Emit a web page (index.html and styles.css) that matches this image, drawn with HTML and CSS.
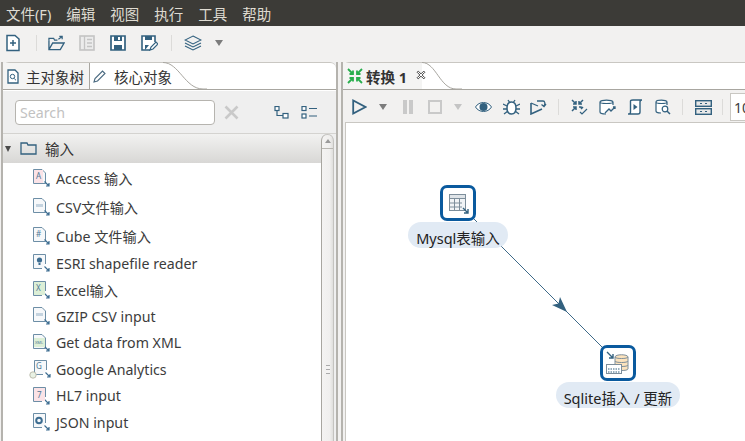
FILE: index.html
```html
<!DOCTYPE html>
<html lang="en">
<head>
<meta charset="UTF-8" />
<title>转换 1</title>
<link rel="stylesheet" href="styles.css">
</head>
<body>

<svg class="defs" width="0" height="0">
  <defs>
    <symbol id="step-arrow" viewBox="0 0 6 6"><path d="M0.5 0.5L5 5M5 2V5H2" fill="none" stroke="#3d6d91" stroke-width="1.2"/></symbol>
    <symbol id="doc" viewBox="0 0 20 20">
      <path d="M2.5 1.5H11L14.5 5V15.500H2.500Z" fill="#f6f8fa" stroke="#6d8ea6"/>
      <use href="#step-arrow" x="13" y="13" width="6" height="6"/>
    </symbol>
    <symbol id="box" viewBox="0 0 20 20">
      <path d="M14.500 11V1.500H2.500V15.500H11" fill="#f6f8fa" stroke="#6d8ea6"/>
      <use href="#step-arrow" x="13" y="13" width="6" height="6"/>
    </symbol>
  </defs>
</svg>

<div class="menubar">
  <span>文件(F)</span><span>编辑</span><span>视图</span><span>执行</span><span>工具</span><span>帮助</span>
</div>

<div class="toolbar">
  <svg class="tool" width="16" height="18" viewBox="0 0 16 18"><path d="M2 1.500H10L14 5V16.500H2Z" fill="#fff" stroke="#33617f" stroke-width="1.500"/><path d="M8 6V12M5 9H11" stroke="#33617f" stroke-width="1.500"/></svg>
  <i class="sep sep-a"></i>
  <svg class="tool t-open" width="17" height="16" viewBox="0 0 18 16"><path d="M1 5V15H13L17 8H5L1 15" fill="none" stroke="#33617f" stroke-width="1.400"/><path d="M1 5V3H6L7 5H10M11 4L15 1M12 1H15V4" fill="none" stroke="#33617f" stroke-width="1.300"/></svg>
  <svg class="tool t-list" width="16" height="16" viewBox="0 0 16 16"><rect x="1" y="1" width="14" height="14" fill="#ececec" stroke="#c4c4c4" stroke-width="1.600"/><path d="M5.500 1V15M8 4.500H13M8 8H13M8 11.500H13" stroke="#c4c4c4" stroke-width="1.300"/></svg>
  <svg class="tool t-save" width="16" height="16" viewBox="0 0 16 16"><path d="M1 1H15V15H1Z" fill="#fff" stroke="#33617f" stroke-width="1.700"/><path d="M4 1V6H12V1M4 15V10H12V15" fill="#33617f"/><rect x="8" y="2" width="2" height="3" fill="#fff"/></svg>
  <svg class="tool t-saveas" width="17" height="17" viewBox="0 0 17 17"><path d="M9 15H1V1H14V7" fill="#fff" stroke="#33617f" stroke-width="1.600"/><path d="M4 1V5H11V1M4 15V10H8" fill="#33617f"/><path d="M9 15L10 12L15 7L17 9L12 14Z" fill="#fff" stroke="#33617f" stroke-width="1.200"/></svg>
  <i class="sep sep-b"></i>
  <svg class="tool t-layers" width="18" height="16" viewBox="0 0 18 16"><path d="M9 1L17 5L9 9L1 5Z" fill="none" stroke="#33617f" stroke-width="1.100"/><path d="M1 8L9 12L17 8M1 11L9 15L17 11" fill="none" stroke="#33617f" stroke-width="1.100"/></svg>
  <i class="caret t-caret"></i>
</div>

<div class="workspace">
  <section class="left-panel">
    <div class="tabstrip">
      <div class="tab-inactive">
        <svg width="12" height="15" viewBox="0 0 12 15"><path d="M1 1H8L11 4V14H1Z" fill="#fff" stroke="#33617f" stroke-width="1.300"/><circle cx="5.500" cy="7.500" r="2.200" fill="none" stroke="#33617f"/><path d="M7.200 9.500L9 11.300" stroke="#33617f"/></svg>
        <span>主对象树</span>
      </div>
      <div class="tab-active">
        <svg width="13" height="13" viewBox="0 0 13 13"><path d="M1 12L2 8.500L9.500 1L12 3.500L4.500 11Z" fill="#fff" stroke="#48687f" stroke-width="1.100"/></svg>
        <span>核心对象</span>
      </div>
      <svg class="tab-curve" width="44" height="28" viewBox="0 0 44 28"><path d="M0 0.500C16 0.500 22 27 40 27H44" fill="none" stroke="#a8a6a0"/></svg>
    </div>
    <div class="search-row">
      <div class="search-input">Search</div>
      <svg class="clear" width="15" height="15" viewBox="0 0 15 15"><path d="M1.500 1.500L13.500 13.500M13.500 1.500L1.500 13.500" stroke="#c9c9c9" stroke-width="2.600"/></svg>
      <svg class="collapse" width="15" height="13" viewBox="0 0 15 13"><path d="M3 3.500V9.500H9" fill="none" stroke="#33617f" stroke-width="1.200"/><rect x="1" y="0.500" width="4" height="4" fill="#fff" stroke="#33617f" stroke-width="1.200"/><rect x="9" y="7.500" width="5" height="4.500" fill="#fff" stroke="#33617f" stroke-width="1.200"/></svg>
      <svg class="expand" width="16" height="13" viewBox="0 0 16 13"><rect x="1" y="0.500" width="4" height="4" fill="#fff" stroke="#33617f" stroke-width="1.200"/><rect x="1" y="8" width="4" height="4" fill="#fff" stroke="#33617f" stroke-width="1.200"/><path d="M8 2.500H16M8 10H16" stroke="#33617f" stroke-width="1.200"/></svg>
    </div>
    <div class="tree-wrap">
      <div class="tree">
        <div class="group">
          <i class="twist"></i>
          <svg width="17" height="13" viewBox="0 0 17 13"><path d="M1 12V1H7L8 3H16V12Z" fill="none" stroke="#33617f" stroke-width="1.300"/></svg>
          <span>输入</span>
        </div>
        <div class="row tall"><svg class="ico" width="20" height="20"><use href="#doc"/><rect x="3" y="2" width="9" height="13" fill="#fbe3e7"/><text x="5" y="11" class="glyph">A</text></svg><span>Access 输入</span></div>
        <div class="row tall"><svg class="ico" width="20" height="20"><use href="#doc"/><rect x="5" y="7" width="7" height="3" fill="#c4d3df"/></svg><span>CSV文件输入</span></div>
        <div class="row tall"><svg class="ico" width="20" height="20"><use href="#doc"/><text x="5" y="11" class="glyph">#</text></svg><span>Cube 文件输入</span></div>
        <div class="row"><svg class="ico" width="20" height="20"><use href="#box"/><circle cx="8.500" cy="7" r="2.600" fill="#3d6d91"/><path d="M7.500 10H9.500V12H7.500Z" fill="#3d6d91"/></svg><span>ESRI shapefile reader</span></div>
        <div class="row"><svg class="ico" width="20" height="20"><use href="#box"/><rect x="3" y="2" width="11" height="13" fill="#dcefd6"/><text x="5" y="11" class="glyph">X</text></svg><span>Excel输入</span></div>
        <div class="row"><svg class="ico" width="20" height="20"><use href="#doc"/><rect x="5" y="7" width="7" height="3" fill="#c4d3df"/></svg><span>GZIP CSV input</span></div>
        <div class="row"><svg class="ico" width="20" height="20"><use href="#doc"/><rect x="3" y="5" width="11" height="9" fill="#dcefd6"/><text x="4" y="11" class="glyph-sm">XML</text></svg><span>Get data from XML</span></div>
        <div class="row"><svg class="ico ico-wide" width="22" height="20" viewBox="-2 0 22 20"><use href="#box"/><text x="5" y="10" class="glyph">G</text><circle cx="2" cy="16" r="3.200" fill="#e8f1e4" stroke="#bdbdae"/></svg><span>Google Analytics</span></div>
        <div class="row"><svg class="ico" width="20" height="20"><use href="#box"/><rect x="3" y="2" width="11" height="13" fill="#fbe3e7"/><text x="6" y="12" class="glyph">7</text></svg><span>HL7 input</span></div>
        <div class="row"><svg class="ico" width="20" height="20"><use href="#box"/><circle cx="8" cy="8.500" r="2.800" fill="none" stroke="#3d6d91" stroke-width="2"/></svg><span>JSON input</span></div>
      </div>
      <div class="scrollbar">
        <div class="sb-up"></div>
        <div class="sb-thumb"><b class="grip"></b></div>
      </div>
    </div>
  </section>

  <section class="right-panel">
    <div class="editor-tabs">
      <div class="editor-tab">
        <svg width="16" height="16" viewBox="0 0 16 16"><g fill="none" stroke="#27ae4c" stroke-width="1.800"><path d="M1 1L6 6M6 2.500V6H2.500"/><path d="M15 1L10 6M10 2.500V6H13.500"/><path d="M1 15L6 10M6 13.500V10H2.500"/><path d="M15 15L10 10M10 13.500V10H13.500"/></g></svg>
        <span class="tab-title">转换 1</span>
        <svg class="tab-close" width="10" height="10" viewBox="0 0 9 9"><path d="M1 2L2 1L4.500 3.500L7 1L8 2L5.500 4.500L8 7L7 8L4.500 5.500L2 8L1 7L3.500 4.500Z" fill="#fff" stroke="#333" stroke-width="0.800"/></svg>
      </div>
      <svg class="tab-curve2" width="40" height="28" viewBox="0 0 40 28"><path d="M0 0.500C14 0.500 18 27 34 27H40" fill="none" stroke="#a8a6a0"/></svg>
    </div>
    <div class="editor-tools">
      <svg width="15" height="16" viewBox="0 0 15 16"><path d="M1.200 1.500V14.500L13.500 8Z" fill="none" stroke="#33617f" stroke-width="1.800"/></svg>
      <i class="caret c1"></i>
      <svg class="t-pause" width="10" height="14" viewBox="0 0 10 14"><path d="M0 0H4V14H0ZM6 0H10V14H6Z" fill="#c9c9c9"/></svg>
      <svg class="t-stop" width="14" height="14" viewBox="0 0 14 14"><rect x="1" y="1" width="12" height="12" fill="none" stroke="#c9c9c9" stroke-width="2"/></svg>
      <i class="caret caret-off c2"></i>
      <svg class="t-eye" width="17" height="12" viewBox="0 0 17 12"><path d="M0.500 6C4 0 13 0 16.500 6C13 12 4 12 0.500 6Z" fill="#fff" stroke="#33617f"/><circle cx="8.500" cy="6" r="4" fill="#33617f"/></svg>
      <svg class="t-bug" width="17" height="16" viewBox="0 0 17 16"><path d="M8.500 3C12 3 13 6 13 9C13 13 11 15 8.500 15C6 15 4 13 4 9C4 6 5 3 8.500 3Z" fill="#fff" stroke="#33617f" stroke-width="1.500"/><path d="M5 1L7 4M12 1L10 4M0 5L4 7M17 5L13 7M0 10H4M17 10H13M1 15L5 12M16 15L12 12" stroke="#33617f" stroke-width="1.300"/></svg>
      <svg class="t-runstep" width="17" height="16" viewBox="0 0 17 16"><path d="M1 4V15L12 10" fill="none" stroke="#33617f" stroke-width="1.600"/><path d="M1 4L8 7M7 2H13C15 2 15.500 5 14 7M11.500 5.500L14 7.500L16 5" fill="none" stroke="#33617f" stroke-width="1.300"/></svg>
      <i class="sep sep-c"></i>
      <svg class="t-check" width="17" height="16" viewBox="0 0 17 16"><path d="M1 1L5 5M5 2V5H2M12 1L8 5M8 2V5H11M1 12L5 8M5 11V8H2M12 8L10 10M8 8H10V9" fill="none" stroke="#33617f" stroke-width="1.500"/><path d="M9 13L11 15L16 10" fill="none" stroke="#33617f" stroke-width="1.200"/></svg>
      <svg class="t-impact" width="17" height="16" viewBox="0 0 17 16"><path d="M14 6V3C14 0.500 1 0.500 1 3V13C1 14.500 4 15 7 15M1 3C1 5 14 5 14 3" fill="#fff" stroke="#33617f" stroke-width="1.200"/><path d="M6 14L10 10L12 12L16 8M14 8H16V10" fill="none" stroke="#33617f" stroke-width="1.300"/></svg>
      <svg class="t-script" width="16" height="16" viewBox="0 0 16 16"><path d="M1 15C3 15 3.500 14 3.500 13V2C3.500 1 5 1 6 1H15C14 1 13 2 13 3V13C13 14.500 12 15 11 15Z" fill="#fff" stroke="#33617f" stroke-width="1.400"/><path d="M6.500 5V11L10.500 8Z" fill="#33617f"/></svg>
      <svg class="t-explore" width="16" height="16" viewBox="0 0 16 16"><path d="M12 6V3C12 0.500 1 0.500 1 3V12C1 13.500 4 14 6 14M1 3C1 5 12 5 12 3" fill="#fff" stroke="#33617f" stroke-width="1.200"/><circle cx="10" cy="10" r="2.800" fill="#fff" stroke="#33617f" stroke-width="1.200"/><path d="M12 12L15 15" stroke="#33617f" stroke-width="1.500"/></svg>
      <i class="sep sep-d"></i>
      <svg class="t-grid" width="17" height="15" viewBox="0 0 17 15"><rect x="0.700" y="0.700" width="15.600" height="5.600" fill="#e8e8e8" stroke="#33617f" stroke-width="1.400"/><rect x="0.700" y="8.700" width="15.600" height="5.600" fill="#e8e8e8" stroke="#33617f" stroke-width="1.400"/><path d="M5 3.500H7M10 3.500H12M5 11.500H7M10 11.500H12" stroke="#33617f"/></svg>
      <i class="sep sep-e"></i>
      <div class="zoom-box">100%</div>
    </div>
    <div class="canvas">
      <svg class="hop" width="132" height="132" viewBox="0 0 132 132">
        <path d="M0 0L130 130" stroke="#3f6a89" stroke-width="1"/>
        <path d="M94 94L79 87L85.500 85.500L87 79Z" fill="#33617f"/>
      </svg>
      <div class="node node-mysql">
        <div class="node-box">
          <svg width="24" height="24" viewBox="0 0 24 24"><rect x="3.500" y="3.500" width="16" height="16" fill="#f1f4f6" stroke="#7d8e9b"/><rect x="3.500" y="3.500" width="16" height="4" fill="#dfe4e8" stroke="#7d8e9b"/><path d="M3.500 12H16M3.500 16H16M8.500 7.500V19.500M13.500 7.500V19.500" stroke="#7d8e9b"/><path d="M17 17L22 22M22 18V22H18" fill="none" stroke="#33617f" stroke-width="1.400"/></svg>
        </div>
        <div class="node-label">Mysql表输入</div>
      </div>
      <div class="node node-sqlite">
        <div class="node-box">
          <svg width="26" height="26" viewBox="0 0 26 26"><path d="M2 2L8 8M8 4V8H4" fill="none" stroke="#33617f" stroke-width="1.400"/><path d="M10 7C10 4 23 4 23 7V19C23 21 10 21 10 19Z" fill="#fce3bd" stroke="#7d8e9b"/><path d="M10 11C10 13 23 13 23 11M10 15C10 17 23 17 23 15M10 7C10 9 23 9 23 7" fill="none" stroke="#7d8e9b"/><rect x="1.500" y="14.500" width="15" height="9" fill="#fff" stroke="#7d8e9b"/><path d="M3 19H15M3 22H15" stroke="#33617f" stroke-dasharray="1.500 1"/></svg>
        </div>
        <div class="node-label">Sqlite插入 / 更新</div>
      </div>
    </div>
  </section>
</div>

</body>
</html>
```

FILE: styles.css
```css
html, body {
  margin: 0;
  height: 100%;
  overflow: hidden;
}
body {
  width: 745px;
  height: 441px;
  display: flex;
  flex-direction: column;
  background: #f2f1f0;
  font-family: "Noto Sans", "Noto Sans CJK SC", sans-serif;
  font-size: 14.2px;
  color: #3c3c3c;
}
svg {
  display: block;
  flex: none;
}
.defs {
  position: absolute;
}
i {
  display: block;
  flex: none;
}

.menubar {
  height: 26px;
  flex: none;
  display: flex;
  align-items: center;
  gap: 15px;
  padding-left: 6px;
  background: #3c3b37;
  color: #dfdbd2;
  font-size: 14.500px;
}

.toolbar {
  height: 36px;
  flex: none;
  display: flex;
  align-items: center;
  padding: 0 0 2px 5px;
  box-sizing: border-box;
}
.sep {
  width: 1px;
  height: 16px;
  background: #dcdbd9;
}
.sep-a { margin: 0 11px 0 15px; }
.sep-b { margin: 0 12px 0 13px; }
.t-list { margin-left: 14px; }
.t-save { margin-left: 15px; }
.t-saveas { margin-left: 15px; }
.caret {
  width: 0;
  height: 0;
  border-left: 4px solid transparent;
  border-right: 4px solid transparent;
  border-top: 6px solid #7c7c7c;
}
.caret-off { border-top-color: #c4c4c4; }
.t-caret { margin-left: 13px; }

.workspace {
  flex: 1;
  display: flex;
  min-height: 0;
  padding-left: 1px;
  gap: 3px;
}
.left-panel {
  width: 337px;
  flex: none;
  display: flex;
  flex-direction: column;
  box-sizing: border-box;
  border-left: 2px solid #b5b3ae;
  border-right: 2px solid #b5b3ae;
  background: #efefef;
}
.tabstrip {
  height: 28px;
  flex: none;
  display: flex;
  background: #fff;
  border-top: 1px solid #c9c7c2;
  border-bottom: 1px solid #a8a6a0;
  box-sizing: border-box;
  border-radius: 6px 6px 0 0;
}
.tab-inactive, .tab-active {
  display: flex;
  align-items: center;
  flex: none;
  white-space: nowrap;
  font-size: 14.500px;
  color: #333;
}
.tab-inactive {
  width: 87px;
  padding-left: 4px;
  gap: 7px;
  box-sizing: border-box;
  background: #f4f4f3;
  border-right: 1px solid #a8a6a0;
}
.tab-active {
  width: 73px;
  box-sizing: border-box;
  padding-left: 3px;
  gap: 8px;
}
.tab-curve {
  margin-top: -1px;
}

.search-row {
  height: 43px;
  flex: none;
  display: flex;
  align-items: center;
  border-top: 1px solid #fff;
  box-sizing: border-box;
}
.search-input {
  width: 200px;
  height: 25px;
  box-sizing: border-box;
  margin-left: 12px;
  padding-left: 4px;
  line-height: 23px;
  background: #fff;
  border: 1px solid #b6b4af;
  border-radius: 4px;
  color: #c2c2c2;
}
.clear { margin-left: 9px; }
.collapse { margin-left: 35px; }
.expand { margin-left: 12px; }

.tree-wrap {
  flex: 1;
  display: flex;
  min-height: 0;
  border-top: 1px solid #d4d3d0;
  padding-right: 2px;
  overflow: hidden;
}
.tree {
  flex: 1;
  background: #fff;
  min-width: 0;
}
.group {
  height: 29px;
  display: flex;
  align-items: center;
  padding-left: 2px;
  background: linear-gradient(#f2f2f1, #d8d7d5);
  color: #333;
  font-size: 14.500px;
}
.twist {
  width: 0;
  height: 0;
  border-left: 3.500px solid transparent;
  border-right: 3.500px solid transparent;
  border-top: 6px solid #4a4a4a;
  margin-right: 9px;
}
.group span { margin-left: 8px; }
.row {
  height: 26.500px;
  display: flex;
  align-items: center;
  padding-left: 28px;
  gap: 5px;
}
.tall { height: 29px; }
.ico-wide { margin-left: -2px; }
.glyph {
  font-size: 8px;
  fill: #4f7896;
}
.glyph-sm {
  font-size: 4px;
  fill: #4f7896;
}
.scrollbar {
  width: 13px;
  flex: none;
  box-sizing: border-box;
  border-left: 1px solid #a8a6a0;
  border-right: 1px solid #c4c3c0;
  border-radius: 7px 7px 0 0;
  background: linear-gradient(90deg, #f4f3f2, #f0efee 70%, #dfdedc);
  display: flex;
  flex-direction: column;
}
.sb-up {
  height: 13px;
  flex: none;
  border-top: 1px solid #c4c3c0;
  border-bottom: 1px solid #b8b6b1;
  border-radius: 7px 7px 0 0;
  position: relative;
}
.sb-up::after {
  content: "";
  position: absolute;
  left: 2.500px;
  top: 4px;
  border-left: 3px solid transparent;
  border-right: 3px solid transparent;
  border-bottom: 4px solid #9a9a9a;
}
.sb-thumb {
  flex: 1;
  display: flex;
  justify-content: center;
  padding-top: 216px;
}
.grip {
  width: 4px;
  height: 7px;
  border-top: 1px solid #aaa;
  border-bottom: 1px solid #aaa;
  background: linear-gradient(#f4f3f2 40%, #aaa 40%, #aaa 60%, #f4f3f2 60%);
}

.right-panel {
  flex: 1;
  min-width: 0;
  display: flex;
  flex-direction: column;
  box-sizing: border-box;
  border-left: 2px solid #b5b3ae;
  background: #f2f1f0;
}
.editor-tabs {
  height: 28px;
  flex: none;
  display: flex;
  background: #fff;
  border-top: 1px solid #c9c7c2;
  border-bottom: 1px solid #a8a6a0;
  box-sizing: border-box;
  border-radius: 6px 0 0 0;
}
.editor-tab {
  width: 79px;
  flex: none;
  box-sizing: border-box;
  display: flex;
  align-items: center;
  padding-left: 4px;
  gap: 3px;
  background: #f4f4f3;
}
.tab-title {
  font-weight: 700;
  font-size: 14.500px;
  color: #333;
  width: 44px;
  flex: none;
}
.tab-close {
  margin-top: -3px;
  margin-left: 3px;
}
.tab-curve2 {
  margin-top: -1px;
}

.editor-tools {
  height: 32px;
  flex: none;
  display: flex;
  align-items: center;
  box-sizing: border-box;
  padding: 2px 0 0 9px;
  overflow: hidden;
}
.c1 { margin-left: 12px; }
.t-pause { margin-left: 16px; }
.t-stop { margin-left: 15px; }
.c2 { margin-left: 12px; }
.t-eye { margin-left: 13px; }
.t-bug { margin-left: 11px; }
.t-runstep { margin-left: 10px; }
.sep-c { margin: 0 12px 0 11px; }
.t-impact { margin-left: 11px; }
.t-script { margin-left: 11px; }
.t-explore { margin-left: 12px; }
.sep-d { margin: 0 12px 0 11px; }
.sep-e { margin: 0 7px 0 10px; }
.zoom-box {
  background: #fff;
  border: 1px solid #c9c7c2;
  border-right: 0;
  height: 26px;
  line-height: 28px;
  padding-left: 3px;
  flex: none;
}

.canvas {
  flex: 1;
  position: relative;
  background: #fff;
  border-top: 1px solid #c9c7c2;
  margin-left: 2px;
  border-left: 1px solid #c9c7c2;
  overflow: hidden;
}
.hop {
  position: absolute;
  left: 127px;
  top: 95px;
}
.node {
  position: absolute;
  display: flex;
  flex-direction: column;
  align-items: center;
}
.node-mysql {
  left: 62px;
  top: 62px;
  width: 100px;
}
.node-sqlite {
  left: 210px;
  top: 222px;
  width: 124px;
}
.node-box {
  width: 36px;
  height: 36px;
  box-sizing: border-box;
  border: 3px solid #0a5a9e;
  border-radius: 7px;
  background: #fff;
  display: flex;
  align-items: center;
  justify-content: center;
}
.node-label {
  align-self: stretch;
  text-align: center;
  height: 26px;
  margin-top: 1px;
  line-height: 33px;
  white-space: nowrap;
  background: #e1eaf4;
  border-radius: 13px;
  color: #222;
  font-size: 14.500px;
}
```
